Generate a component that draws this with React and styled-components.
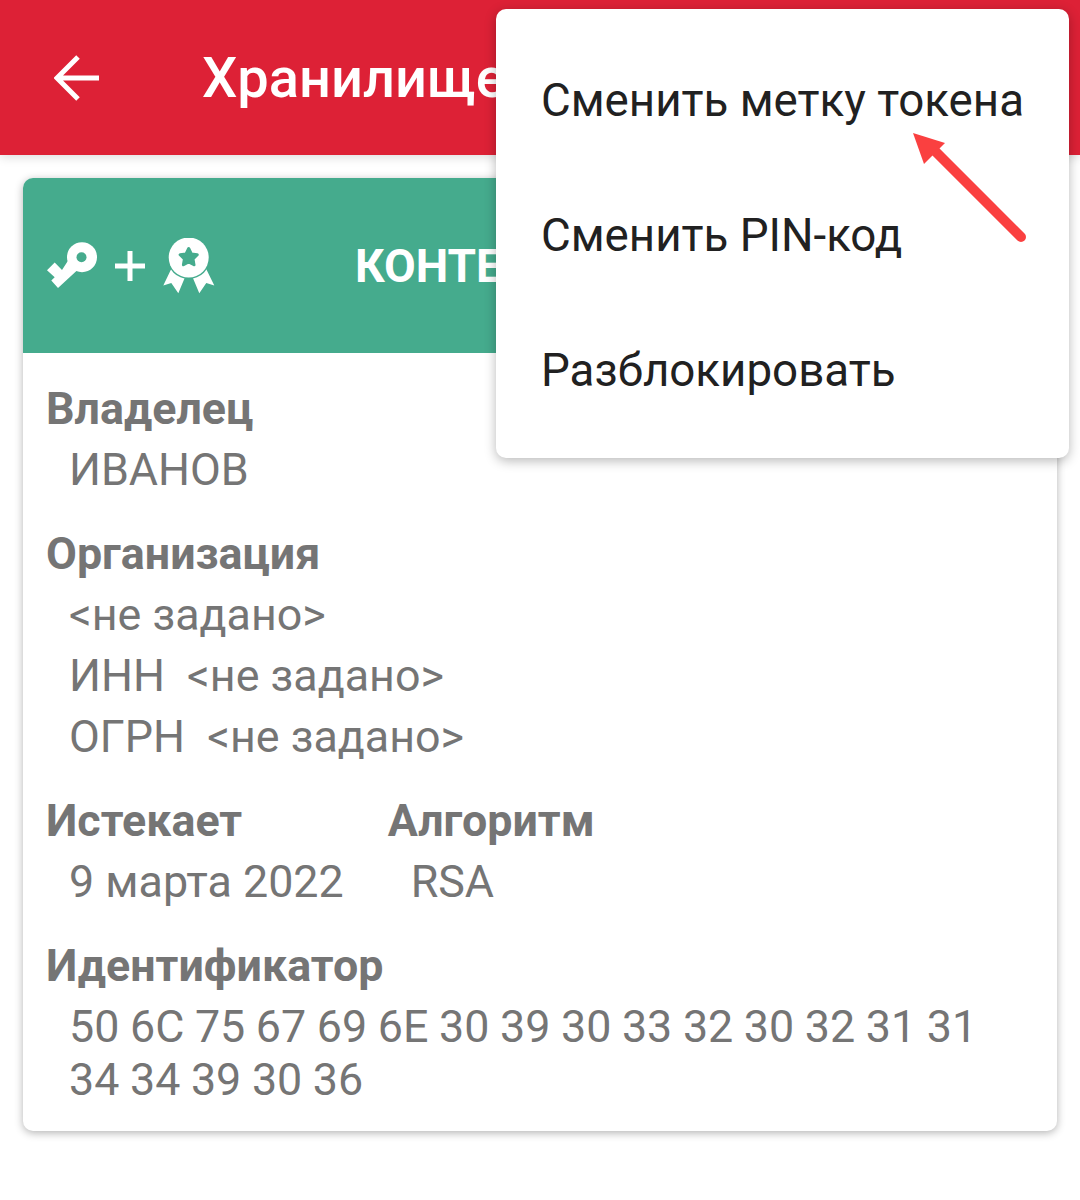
import React from 'react'
import styled, { createGlobalStyle } from 'styled-components'

const GlobalStyle = createGlobalStyle`
  html, body {
    margin: 0;
    background: #fff;
    font-family: Roboto, "Noto Sans", sans-serif;
  }
`

const GREEN = '#45ab8d'

const Screen = styled.div`
  position: relative;
  width: 1080px;
  height: 1200px;
  overflow: hidden;
  background: #fff;
`

const AppBar = styled.header`
  height: 155px;
  display: flex;
  align-items: center;
  padding-left: 54px;
  gap: 102px;
  background: #dd2136;
  box-shadow: 0 2px 10px rgba(0, 0, 0, 0.14);
  color: #fff;
`

const BackIcon = styled.svg`
  width: 46px;
  height: 46px;
  flex: none;
`

const Title = styled.h1`
  margin: 0;
  font-size: 56px;
  line-height: 64px;
  font-weight: 500;
  white-space: nowrap;
`

const Card = styled.section`
  margin: 23px 23px 0;
  border-radius: 10px;
  overflow: hidden;
  background: #fff;
  box-shadow: 0 2px 8px rgba(0, 0, 0, 0.3);
`

const CardHead = styled.div`
  height: 175px;
  display: flex;
  align-items: center;
  padding-left: 22px;
  background: ${GREEN};
  color: #fff;
`

const HeadIcon = styled.svg`
  flex: none;
  display: block;
  width: ${(p) => p.$w}px;
  height: ${(p) => p.$h}px;
`

const Plus = styled.svg`
  flex: none;
  width: 30px;
  height: 30px;
  margin: 0 18px;
`

const Kind = styled.div`
  margin-left: 140px;
  font-size: 46px;
  font-weight: 700;
  white-space: nowrap;
`

const CardBody = styled.div`
  display: flex;
  flex-direction: column;
  gap: 31px;
  padding: 29px 24px 25px 23px;
  color: #757575;
`

const Group = styled.div`
  display: flex;
  flex-direction: column;
  gap: 8px;
`

const Columns = styled.div`
  display: flex;
  gap: 44px;
`

const Label = styled.div`
  font-size: 44.8px;
  line-height: 53px;
  font-weight: 700;
`

const Value = styled.div`
  padding-left: 23px;
  font-size: 44.8px;
  line-height: 53px;
  white-space: pre-wrap;
`

const HexValue = styled(Value)`
  padding-right: 20px;
  word-spacing: -0.5px;
`

const Menu = styled.div`
  position: absolute;
  top: 9px;
  left: 496px;
  width: 573px;
  height: 449px;
  box-sizing: border-box;
  padding-top: 24px;
  border-radius: 10px;
  background: #fff;
  box-shadow: 0 3px 12px rgba(0, 0, 0, 0.28);
`

const MenuItem = styled.div`
  height: 135px;
  display: flex;
  align-items: center;
  padding-left: 45px;
  font-size: 45.7px;
  color: #212121;
  white-space: nowrap;
`

const Arrow = styled.svg`
  position: absolute;
  top: 125px;
  left: 905px;
  width: 130px;
  height: 125px;
`

export default function App() {
  return (
    <Screen>
      <GlobalStyle />
      <AppBar>
        <BackIcon viewBox="0 0 46 46" fill="none" stroke="#fff" strokeWidth="5">
          <path d="M45 23H3M24 2 3 23l21 21" />
        </BackIcon>
        <Title>Хранилище</Title>
      </AppBar>

      <Card>
        <CardHead>
          <HeadIcon $w={52} $h={48} viewBox="0 0 52 48">
            <path d="M17 28 9.700 20.500 2 28.200l7.700 7-3.400 3.400 6.700 7.300L39 22 28 11Z" fill="#fff" />
            <circle cx="37" cy="15.200" r="15" fill="#fff" />
            <circle cx="36.500" cy="15.200" r="5" fill={GREEN} />
          </HeadIcon>
          <Plus viewBox="0 0 30 30" fill="#fff">
            <path d="M12.500 0h5v12.500H30v5H17.500V30h-5V17.500H0v-5h12.500Z" />
          </Plus>
          <HeadIcon $w={52} $h={56} viewBox="0 0 52 56">
            <path d="M8.700 30 .3 47.500l8-2.500 7 10.200 6.700-16Z" fill="#fff" />
            <path d="m42.700 30 8.600 17.500-8-2.500-7 10.200-6.700-16Z" fill="#fff" />
            <circle cx="25.700" cy="19.500" r="21.500" fill={GREEN} />
            <circle cx="25.700" cy="19.500" r="20" fill="#fff" />
            <path
              d="M25.700 10.500 28.350 15.860 34.260 16.720 29.980 20.890 30.990 26.780 25.700 24 20.410 26.780 21.420 20.890 17.140 16.720 23.050 15.860Z"
              fill={GREEN}
              stroke={GREEN}
              strokeWidth="3"
              strokeLinejoin="round"
            />
          </HeadIcon>
          <Kind>КОНТЕЙНЕР</Kind>
        </CardHead>
        <CardBody>
          <Group>
            <Label>Владелец</Label>
            <Value>ИВАНОВ</Value>
          </Group>
          <Group>
            <Label>Организация</Label>
            <Value>{'<не задано>'}</Value>
            <Value>{'ИНН  <не задано>'}</Value>
            <Value>{'ОГРН  <не задано>'}</Value>
          </Group>
          <Columns>
            <Group>
              <Label>Истекает</Label>
              <Value>9 марта 2022</Value>
            </Group>
            <Group>
              <Label>Алгоритм</Label>
              <Value>RSA</Value>
            </Group>
          </Columns>
          <Group>
            <Label>Идентификатор</Label>
            <HexValue>50 6C 75 67 69 6E 30 39 30 33 32 30 32 31 31 34 34 39 30 36</HexValue>
          </Group>
        </CardBody>
      </Card>

      <Menu>
        <MenuItem>Сменить метку токена</MenuItem>
        <MenuItem>Сменить PIN-код</MenuItem>
        <MenuItem>Разблокировать</MenuItem>
      </Menu>

      <Arrow viewBox="905 125 130 125">
        <path d="M1021 237 934 150" stroke="#fa4040" strokeWidth="10" strokeLinecap="round" fill="none" />
        <path d="M913 133 945 143 924 164Z" fill="#fa4040" />
      </Arrow>
    </Screen>
  )
}
